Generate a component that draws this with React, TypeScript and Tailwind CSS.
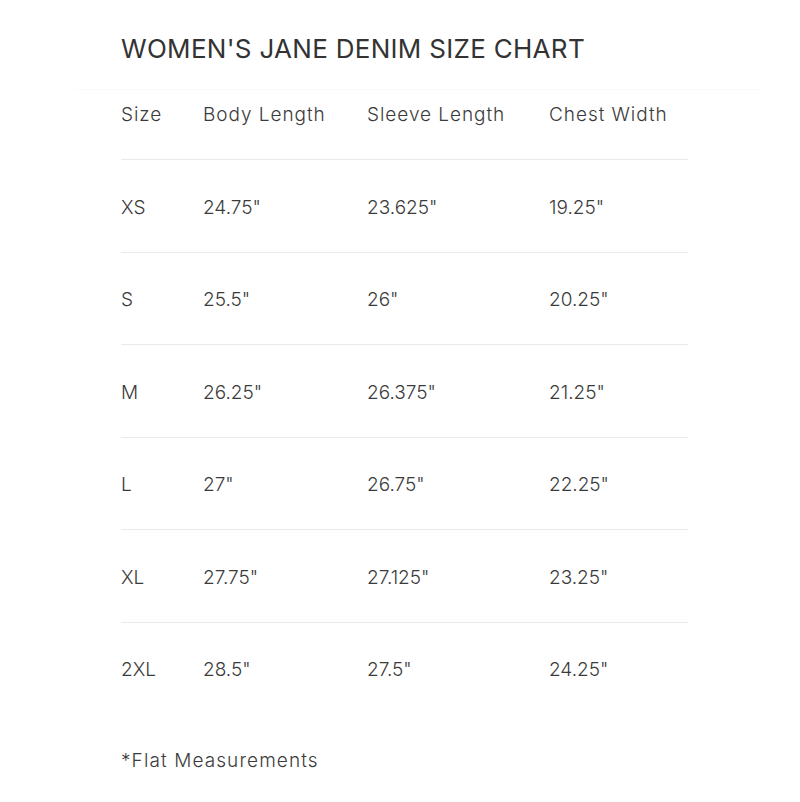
import React from "react";

const rows = [
  ["XS", "24.75\"", "23.625\"", "19.25\""],
  ["S", "25.5\"", "26\"", "20.25\""],
  ["M", "26.25\"", "26.375\"", "21.25\""],
  ["L", "27\"", "26.75\"", "22.25\""],
  ["XL", "27.75\"", "27.125\"", "23.25\""],
  ["2XL", "28.5\"", "27.5\"", "24.25\""],
];

export default function App() {
  return (
    <div
      className="w-[800px] h-[802px] bg-white text-[#3b3b3b] overflow-hidden"
      style={{ fontFamily: "Inter, 'Noto Sans', sans-serif" }}
    >
      <div className="h-[67px] pt-[32px] pl-[121px]">
        <h1 className="text-[26px] leading-[34px] font-normal tracking-[0.3px] text-[#333]">
          WOMEN'S JANE DENIM SIZE CHART
        </h1>
      </div>
      <div className="relative">
        <div className="absolute left-[75px] right-[40px] top-[22px] h-px bg-[#fafafa]" />
      </div>
      <div className="pl-[121px]">
        <div className="w-[567px] font-light text-[19px]">
          <div className="grid grid-cols-[82px_164px_182px_139px] h-[92px] items-center pt-[4px] tracking-[0.95px]">
            <div>Size</div>
            <div>Body Length</div>
            <div>Sleeve Length</div>
            <div>Chest Width</div>
          </div>
          {rows.map((r, i) => (
            <div
              key={r[0]}
              className={`grid grid-cols-[82px_164px_182px_139px] items-center pt-[4px] border-t border-[#e9e9e9] ${
                i % 2 === 0 ? "h-[93px]" : "h-[92px]"
              }`}
            >
              {r.map((c, j) => (
                <div key={j}>{c}</div>
              ))}
            </div>
          ))}
          <div className="mt-[33px] leading-[28px] tracking-[1.1px]">*Flat Measurements</div>
        </div>
      </div>
    </div>
  );
}
